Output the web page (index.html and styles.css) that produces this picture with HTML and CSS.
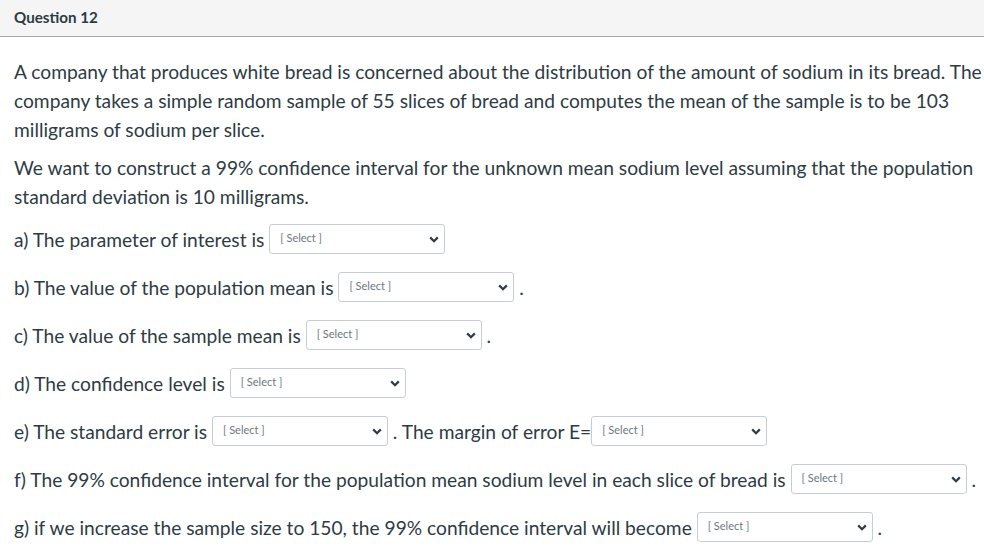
FILE: index.html
```html
<!DOCTYPE html>
<html>
<head>
<meta charset="utf-8">
<link rel="stylesheet" href="styles.css">
</head>
<body>
<div class="header"><span class="title">Question 12</span></div>
<div class="content">
  <p class="para">A company that produces white bread is concerned about the distribution of the amount of sodium in its bread. The company takes a simple random sample of 55 slices of bread and computes the mean of the sample is to be 103 milligrams of sodium per slice.</p>
  <p class="para para-last">We want to construct a 99% confidence interval for the unknown mean sodium level assuming that the population standard deviation is 10 milligrams.</p>
  <div class="rows">
    <div class="row">a) The parameter of interest is <span class="select"><span class="ph">[ Select ]</span><svg class="chev" viewBox="0 0 10 7" width="10" height="7"><path d="M1.2 1.4 L5 5.2 L8.8 1.4" fill="none" stroke="#2d3b45" stroke-width="2.2"/></svg></span></div>
    <div class="row">b) The value of the population mean is <span class="select"><span class="ph">[ Select ]</span><svg class="chev" viewBox="0 0 10 7" width="10" height="7"><path d="M1.2 1.4 L5 5.2 L8.8 1.4" fill="none" stroke="#2d3b45" stroke-width="2.2"/></svg></span> .</div>
    <div class="row">c) The value of the sample mean is <span class="select"><span class="ph">[ Select ]</span><svg class="chev" viewBox="0 0 10 7" width="10" height="7"><path d="M1.2 1.4 L5 5.2 L8.8 1.4" fill="none" stroke="#2d3b45" stroke-width="2.2"/></svg></span> .</div>
    <div class="row">d) The confidence level is <span class="select"><span class="ph">[ Select ]</span><svg class="chev" viewBox="0 0 10 7" width="10" height="7"><path d="M1.2 1.4 L5 5.2 L8.8 1.4" fill="none" stroke="#2d3b45" stroke-width="2.2"/></svg></span></div>
    <div class="row">e) The standard error is <span class="select"><span class="ph">[ Select ]</span><svg class="chev" viewBox="0 0 10 7" width="10" height="7"><path d="M1.2 1.4 L5 5.2 L8.8 1.4" fill="none" stroke="#2d3b45" stroke-width="2.2"/></svg></span> . The margin of error E=<span class="select"><span class="ph">[ Select ]</span><svg class="chev" viewBox="0 0 10 7" width="10" height="7"><path d="M1.2 1.4 L5 5.2 L8.8 1.4" fill="none" stroke="#2d3b45" stroke-width="2.2"/></svg></span></div>
    <div class="row">f) The 99% confidence interval for the population mean sodium level in each slice of bread is <span class="select"><span class="ph">[ Select ]</span><svg class="chev" viewBox="0 0 10 7" width="10" height="7"><path d="M1.2 1.4 L5 5.2 L8.8 1.4" fill="none" stroke="#2d3b45" stroke-width="2.2"/></svg></span> .</div>
    <div class="row">g) if we increase the sample size to 150, the 99% confidence interval will become <span class="select"><span class="ph">[ Select ]</span><svg class="chev" viewBox="0 0 10 7" width="10" height="7"><path d="M1.2 1.4 L5 5.2 L8.8 1.4" fill="none" stroke="#2d3b45" stroke-width="2.2"/></svg></span> .</div>
  </div>
</div>
</body>
</html>
```
FILE: styles.css
```css
html, body {
  margin: 0;
  padding: 0;
  background: #ffffff;
}
body {
  font-family: Lato, "Open Sans", "Liberation Sans", sans-serif;
  color: #2d3b45;
}
.header {
  box-sizing: border-box;
  height: 37px;
  background: #f5f5f5;
  border-bottom: 1px solid #a8a8a8;
  padding: 7px 14px 0 14px;
}
.title {
  font-size: 15.2px;
  line-height: 18px;
  font-weight: 700;
  color: #2d3b45;
}
.content {
  padding: 20px 0 0 14px;
}
.para {
  margin: 0 0 9px 0;
  font-size: 19.2px;
  line-height: 29px;
}
.para-last {
  margin-bottom: 5px;
}
.row {
  height: 48px;
  line-height: 48px;
  font-size: 19.2px;
  white-space: nowrap;
}
.select {
  display: inline-flex;
  align-items: center;
  justify-content: space-between;
  box-sizing: border-box;
  width: 176px;
  height: 30px;
  vertical-align: middle;
  border: 1px solid #c7cdd1;
  border-radius: 3px;
  padding: 0 5px 0 10px;
  line-height: normal;
  background: #fff;
  position: relative;
  top: -3px;
}
.ph {
  font-size: 11px;
  color: #6b7780;
  margin-top: -3px;
}
.chev {
  display: block;
}
```
